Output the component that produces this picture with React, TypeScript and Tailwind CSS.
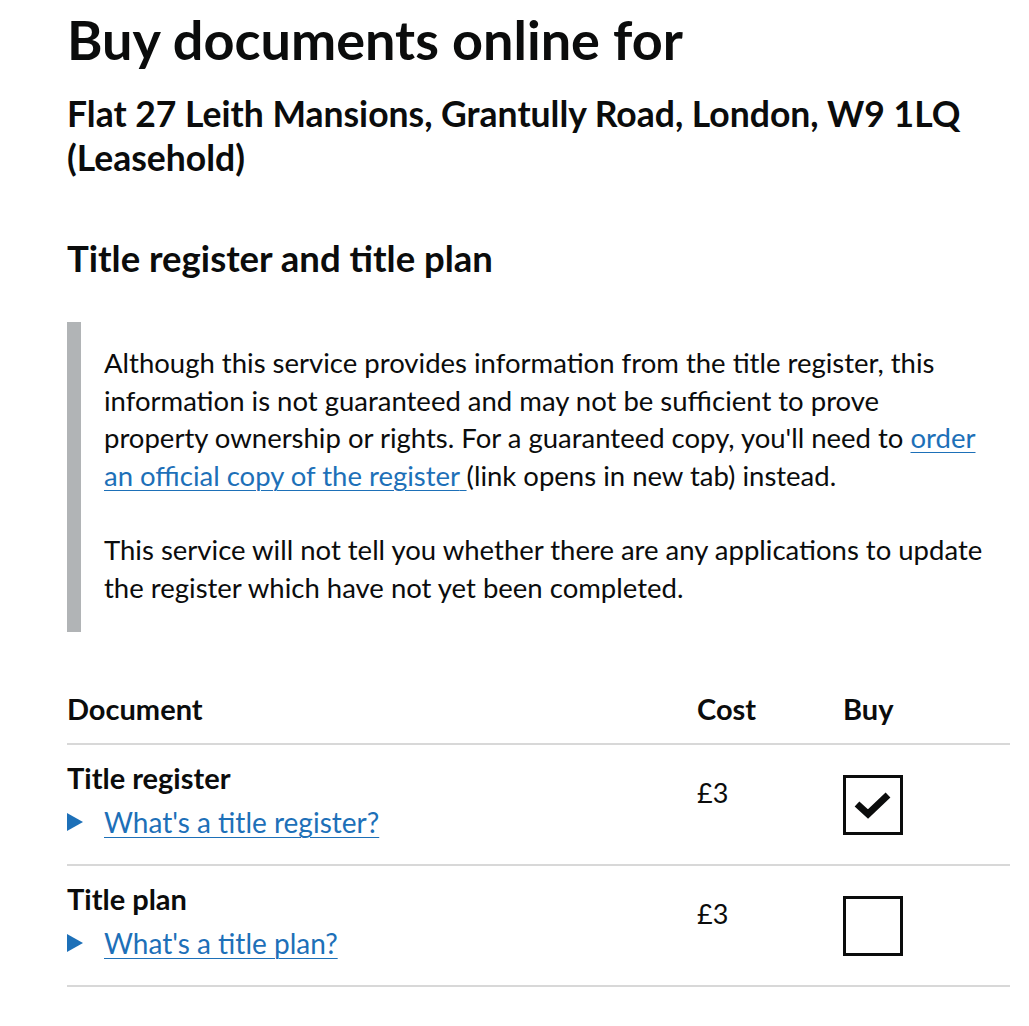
const Check = () => (
  <svg width="38" height="30" viewBox="0 0 38 30" className="block">
    <path d="M3 14 L14 24 L34 5" fill="none" stroke="#0b0c0c" strokeWidth="7" strokeLinecap="butt" strokeLinejoin="miter" />
  </svg>
)

const Triangle = () => (
  <svg width="16" height="18" viewBox="0 0 16 18" className="block">
    <polygon points="0,0 16,9 0,18" fill="#1d70b8" />
  </svg>
)

type Doc = { name: string; help: string; cost: string; checked: boolean }

const docs: Doc[] = [
  { name: 'Title register', help: "What's a title register?", cost: '£3', checked: true },
  { name: 'Title plan', help: "What's a title plan?", cost: '£3', checked: false },
]

const Row = ({ doc }: { doc: Doc }) => (
  <div className="grid grid-cols-[630px_146px_167px] border-b-2 border-[#d8d8d8] h-[121px]">
    <div className="pt-[15px]">
      <div className="text-[29px] font-bold leading-[36px]">{doc.name}</div>
      <div className="flex items-center mt-[8px]">
        <Triangle />
        <a href="#" className="ml-[21px] text-[28px] leading-[36px] text-[#1d70b8] underline underline-offset-[4px] decoration-1">
          {doc.help}
        </a>
      </div>
    </div>
    <div className="pt-[30px] text-[27px] leading-[36px]">{doc.cost}</div>
    <div className="pt-[30px]">
      <div className="w-[60px] h-[60px] border-[3px] border-[#0b0c0c] flex items-center justify-center">
        {doc.checked && <Check />}
      </div>
    </div>
  </div>
)

export default function App() {
  return (
    <div className="min-h-screen bg-white text-[#0b0c0c] font-['Lato',sans-serif] px-[67px] pt-[8px]">
      <h1 className="text-[54px] font-bold leading-[64px]">Buy documents online for</h1>
      <h2 className="mt-[20px] text-[35.5px] font-bold leading-[44px]">
        Flat 27 Leith Mansions, Grantully Road, London, W9 1LQ
        <br />
        (Leasehold)
      </h2>

      <h2 className="mt-[58px] text-[36.5px] font-bold leading-[40px]">Title register and title plan</h2>

      <div className="mt-[44px] border-l-[14px] border-[#b1b4b6] pl-[23px] pt-[22px] pb-[26px]">
        <div className="w-[882px] text-[27.5px] leading-[37.5px]">
          <p>
            Although this service provides information from the title register, this information is not
            guaranteed and may not be sufficient to prove property ownership or rights. For a guaranteed
            copy, you'll need to{' '}
            <a href="#" className="text-[#1d70b8] underline underline-offset-[4px] decoration-1">
              order an official copy of the register{' '}
            </a>
            (link opens in new tab) instead.
          </p>
          <p className="mt-[37px]">
            This service will not tell you whether there are any applications to update the register which
            have not yet been completed.
          </p>
        </div>
      </div>

      <div className="mt-[54px] w-[943px]">
        <div className="grid grid-cols-[630px_146px_167px] border-b-2 border-[#d8d8d8] h-[59px] text-[29px] font-bold leading-[36px] pt-[5px]">
          <div>Document</div>
          <div>Cost</div>
          <div>Buy</div>
        </div>
        {docs.map((d) => (
          <Row key={d.name} doc={d} />
        ))}
      </div>
    </div>
  )
}
